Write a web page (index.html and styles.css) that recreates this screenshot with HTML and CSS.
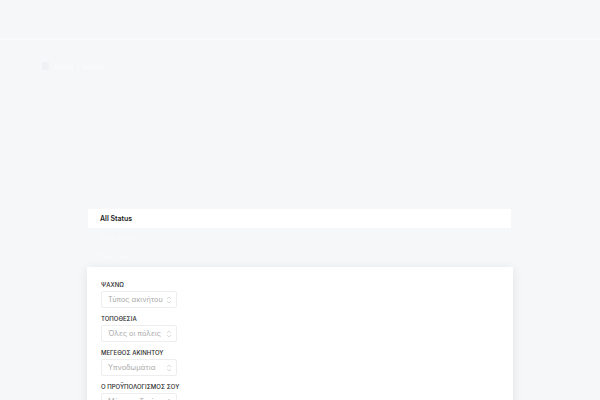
FILE: index.html
```html
<!DOCTYPE html>
<html lang="el">
<head>
    <meta charset="UTF-8">
    <meta name="viewport" content="width=device-width, initial-scale=1.0">
    <title>Ακίνητα</title>
    <link rel="stylesheet" href="styles.css">
</head>
<body>

<div class="top-header"></div>

<div class="hero">
    <div class="breadcrumb">
        <span class="crumb-icon"></span>
        <span>Αρχική</span>
        <span class="sep">/</span>
        <span>Ακίνητα</span>
    </div>
</div>

<div class="content">
    <div class="status-bar">All Status</div>
    <div class="status-list">
        <div class="status-item">Προς πώληση</div>
        <div class="status-item">Προς ενοικ.</div>
    </div>

    <div class="filter-card">
        <div class="field">
            <div class="field-label">Ψάχνω</div>
            <div class="select-box">
                <span class="select-text">Τύπος ακινήτου</span>
                <svg class="select-arrow" viewBox="0 0 6 8" width="6" height="8"><path d="M1 3 L3 1 L5 3 M1 5 L3 7 L5 5" fill="none" stroke="#d2d2d2" stroke-width="0.8"/></svg>
            </div>
        </div>
        <div class="field">
            <div class="field-label">Τοποθεσία</div>
            <div class="select-box">
                <span class="select-text">Όλες οι πόλεις</span>
                <svg class="select-arrow" viewBox="0 0 6 8" width="6" height="8"><path d="M1 3 L3 1 L5 3 M1 5 L3 7 L5 5" fill="none" stroke="#d2d2d2" stroke-width="0.8"/></svg>
            </div>
        </div>
        <div class="field">
            <div class="field-label">Μέγεθος ακινήτου</div>
            <div class="select-box">
                <span class="select-text">Υπνοδωμάτια</span>
                <svg class="select-arrow" viewBox="0 0 6 8" width="6" height="8"><path d="M1 3 L3 1 L5 3 M1 5 L3 7 L5 5" fill="none" stroke="#d2d2d2" stroke-width="0.8"/></svg>
            </div>
        </div>
        <div class="field">
            <div class="field-label">Ο προϋπολογισμός σου</div>
            <div class="select-box">
                <span class="select-text">Μέγιστη Τιμή</span>
                <svg class="select-arrow" viewBox="0 0 6 8" width="6" height="8"><path d="M1 3 L3 1 L5 3 M1 5 L3 7 L5 5" fill="none" stroke="#d2d2d2" stroke-width="0.8"/></svg>
            </div>
        </div>
    </div>
</div>

</body>
</html>
```

FILE: styles.css
```css
body {
    font-family: Inter, "Noto Sans", sans-serif;
    margin: 0;
    padding: 0;
    background-color: #f6f7f9;
    overflow: hidden;
}
.top-header {
    height: 38px;
    border-bottom: 2px solid #f9fafb;
}
.hero {
    height: 169px;
    padding: 22px 42px 0;
    box-sizing: border-box;
}
.breadcrumb {
    display: flex;
    align-items: center;
    gap: 3px;
    font-size: 6px;
    color: #fcfcfd;
}
.crumb-icon {
    width: 7px;
    height: 8px;
    border-radius: 1px;
    background-color: #f0f1f4;
    margin-right: 2px;
}
.content {
    width: 426px;
    margin: 0 auto;
}
.status-bar {
    height: 19px;
    margin: 0 2px 0 1px;
    padding-left: 12px;
    background-color: #fff;
    font-size: 7px;
    font-weight: 600;
    line-height: 19px;
    color: #222;
}
.status-list {
    padding: 0 13px;
}
.status-item {
    height: 19px;
    line-height: 19px;
    font-size: 6px;
    color: #fbfbfc;
}
.filter-card {
    margin-top: 1px;
    background-color: #fff;
    padding: 14px 14px 20px;
    box-shadow: 0 2px 10px rgba(0, 0, 0, 0.09);
}
.field {
    margin-bottom: 7px;
}
.field-label {
    font-size: 6px;
    line-height: 8px;
    font-weight: 500;
    text-transform: uppercase;
    color: #2a2a2a;
    margin-bottom: 2px;
}
.select-box {
    width: 76px;
    height: 17px;
    box-sizing: border-box;
    border: 1px solid #eeeeee;
    border-radius: 2px;
    display: flex;
    align-items: center;
    padding: 0 4px 0 6px;
    background-color: #fff;
}
.select-text {
    flex: 1;
    font-size: 7.3px;
    color: #aaaaaa;
    white-space: nowrap;
    overflow: hidden;
}
.select-arrow {
    margin-left: 2px;
    flex-shrink: 0;
}
```
